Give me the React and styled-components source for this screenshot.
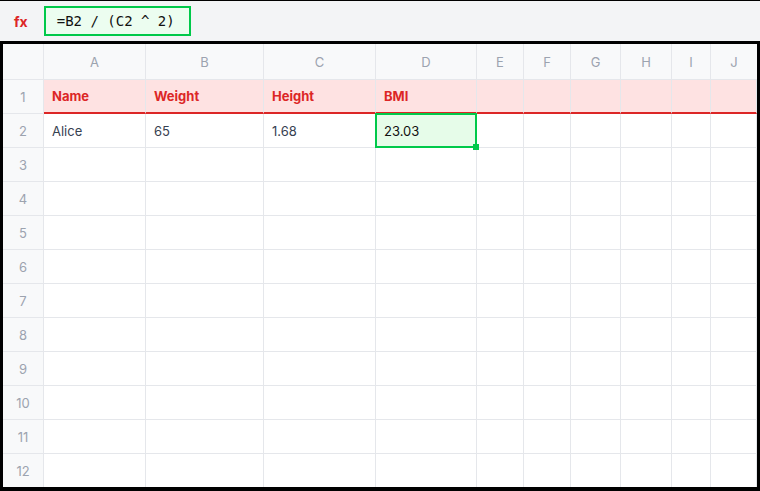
import React from "react";
import styled, { createGlobalStyle } from "styled-components";

const GlobalStyle = createGlobalStyle`
  html, body {
    margin: 0;
    padding: 0;
    background: #ffffff;
  }
  body {
    font-family: "Inter", "Noto Sans", sans-serif;
  }
  * {
    box-sizing: border-box;
  }
`;

const COLUMNS = [
  { key: "A", width: 102 },
  { key: "B", width: 118 },
  { key: "C", width: 112 },
  { key: "D", width: 101 },
  { key: "E", width: 47 },
  { key: "F", width: 47 },
  { key: "G", width: 50 },
  { key: "H", width: 51 },
  { key: "I", width: 39 },
  { key: "J", width: 46 },
];

const DATA = {
  1: { A: "Name", B: "Weight", C: "Height", D: "BMI" },
  2: { A: "Alice", B: "65", C: "1.68", D: "23.03" },
};

const ROWS = Array.from({ length: 12 }, (_, i) => i + 1);

const App = () => {
  return (
    <>
      <GlobalStyle />
      <Page>
        <FormulaBar>
          <Fx>fx</Fx>
          <FormulaInput>=B2 / (C2 ^ 2)</FormulaInput>
        </FormulaBar>

        <Sheet>
          <Grid>
            <Corner />
            {COLUMNS.map((c) => (
              <ColHeader key={c.key}>{c.key}</ColHeader>
            ))}

            {ROWS.map((r) => (
              <React.Fragment key={r}>
                <RowHeader>{r}</RowHeader>
                {COLUMNS.map((c) => {
                  const value = DATA[r] ? DATA[r][c.key] : "";
                  const selected = r === 2 && c.key === "D";
                  return (
                    <Cell key={c.key} $header={r === 1} $selected={selected}>
                      {value}
                      {selected && <Handle />}
                    </Cell>
                  );
                })}
              </React.Fragment>
            ))}
          </Grid>
        </Sheet>
      </Page>
    </>
  );
};

export default App;

const Page = styled.div`
  width: 760px;
  height: 491px;
  display: flex;
  flex-direction: column;
  overflow: hidden;
  background: #ffffff;
`;

const FormulaBar = styled.div`
  height: 41px;
  display: flex;
  align-items: center;
  gap: 16px;
  padding: 0 14px;
  background: #f3f4f6;
  border-top: 1px solid #000;
`;

const Fx = styled.span`
  font-family: "Inter", sans-serif;
  font-weight: 700;
  font-size: 14px;
  color: #dc2626;
`;

const FormulaInput = styled.div`
  height: 30px;
  width: 147px;
  display: flex;
  align-items: center;
  padding: 0 11px;
  background: #ecfdf0;
  border: 2px solid #00c94a;
  font-family: "DejaVu Sans Mono", "Liberation Mono", monospace;
  font-size: 14px;
  color: #111111;
  white-space: nowrap;
`;

const Sheet = styled.div`
  flex: 1;
  border: 3px solid #000;
  border-bottom-width: 4px;
  overflow: hidden;
`;

const Grid = styled.div`
  display: grid;
  grid-template-columns: 41px ${COLUMNS.map((c) => c.width + "px").join(" ")};
  grid-auto-rows: 34px;
  grid-template-rows: 36px;
`;

const Corner = styled.div`
  background: #f8f9fa;
  border-right: 1px solid #e5e7eb;
  border-bottom: 1px solid #e5e7eb;
`;

const ColHeader = styled.div`
  display: flex;
  align-items: center;
  justify-content: center;
  background: #f8f9fa;
  border-right: 1px solid #e5e7eb;
  border-bottom: 1px solid #e5e7eb;
  font-size: 13px;
  color: #9ca3af;

  &:nth-child(11) {
    border-right: none;
  }
`;

const RowHeader = styled.div`
  display: flex;
  align-items: center;
  justify-content: center;
  background: #f8f9fa;
  border-right: 1px solid #e5e7eb;
  border-bottom: 1px solid #e5e7eb;
  font-size: 13px;
  color: #9ca3af;
`;

const Cell = styled.div`
  position: relative;
  display: flex;
  align-items: center;
  padding: 0 8px;
  font-size: 13px;
  white-space: nowrap;
  border-right: 1px solid #e5e7eb;
  border-bottom: 1px solid #e5e7eb;
  color: #374151;
  background: #ffffff;

  ${(p) =>
    p.$header &&
    `
    background: #fee2e2;
    color: #dc2626;
    font-weight: 700;
    border-bottom: 2px solid #dc2626;
  `}

  ${(p) =>
    p.$selected &&
    `
    background: #e6fce9;
    color: #111111;
    border: 2px solid #00c94a;
    margin: -1px 0 0 -1px;
    padding-left: 7px;
  `}
`;

const Handle = styled.span`
  position: absolute;
  right: -4px;
  bottom: -4px;
  width: 6px;
  height: 6px;
  background: #00c94a;
  z-index: 2;
`;
